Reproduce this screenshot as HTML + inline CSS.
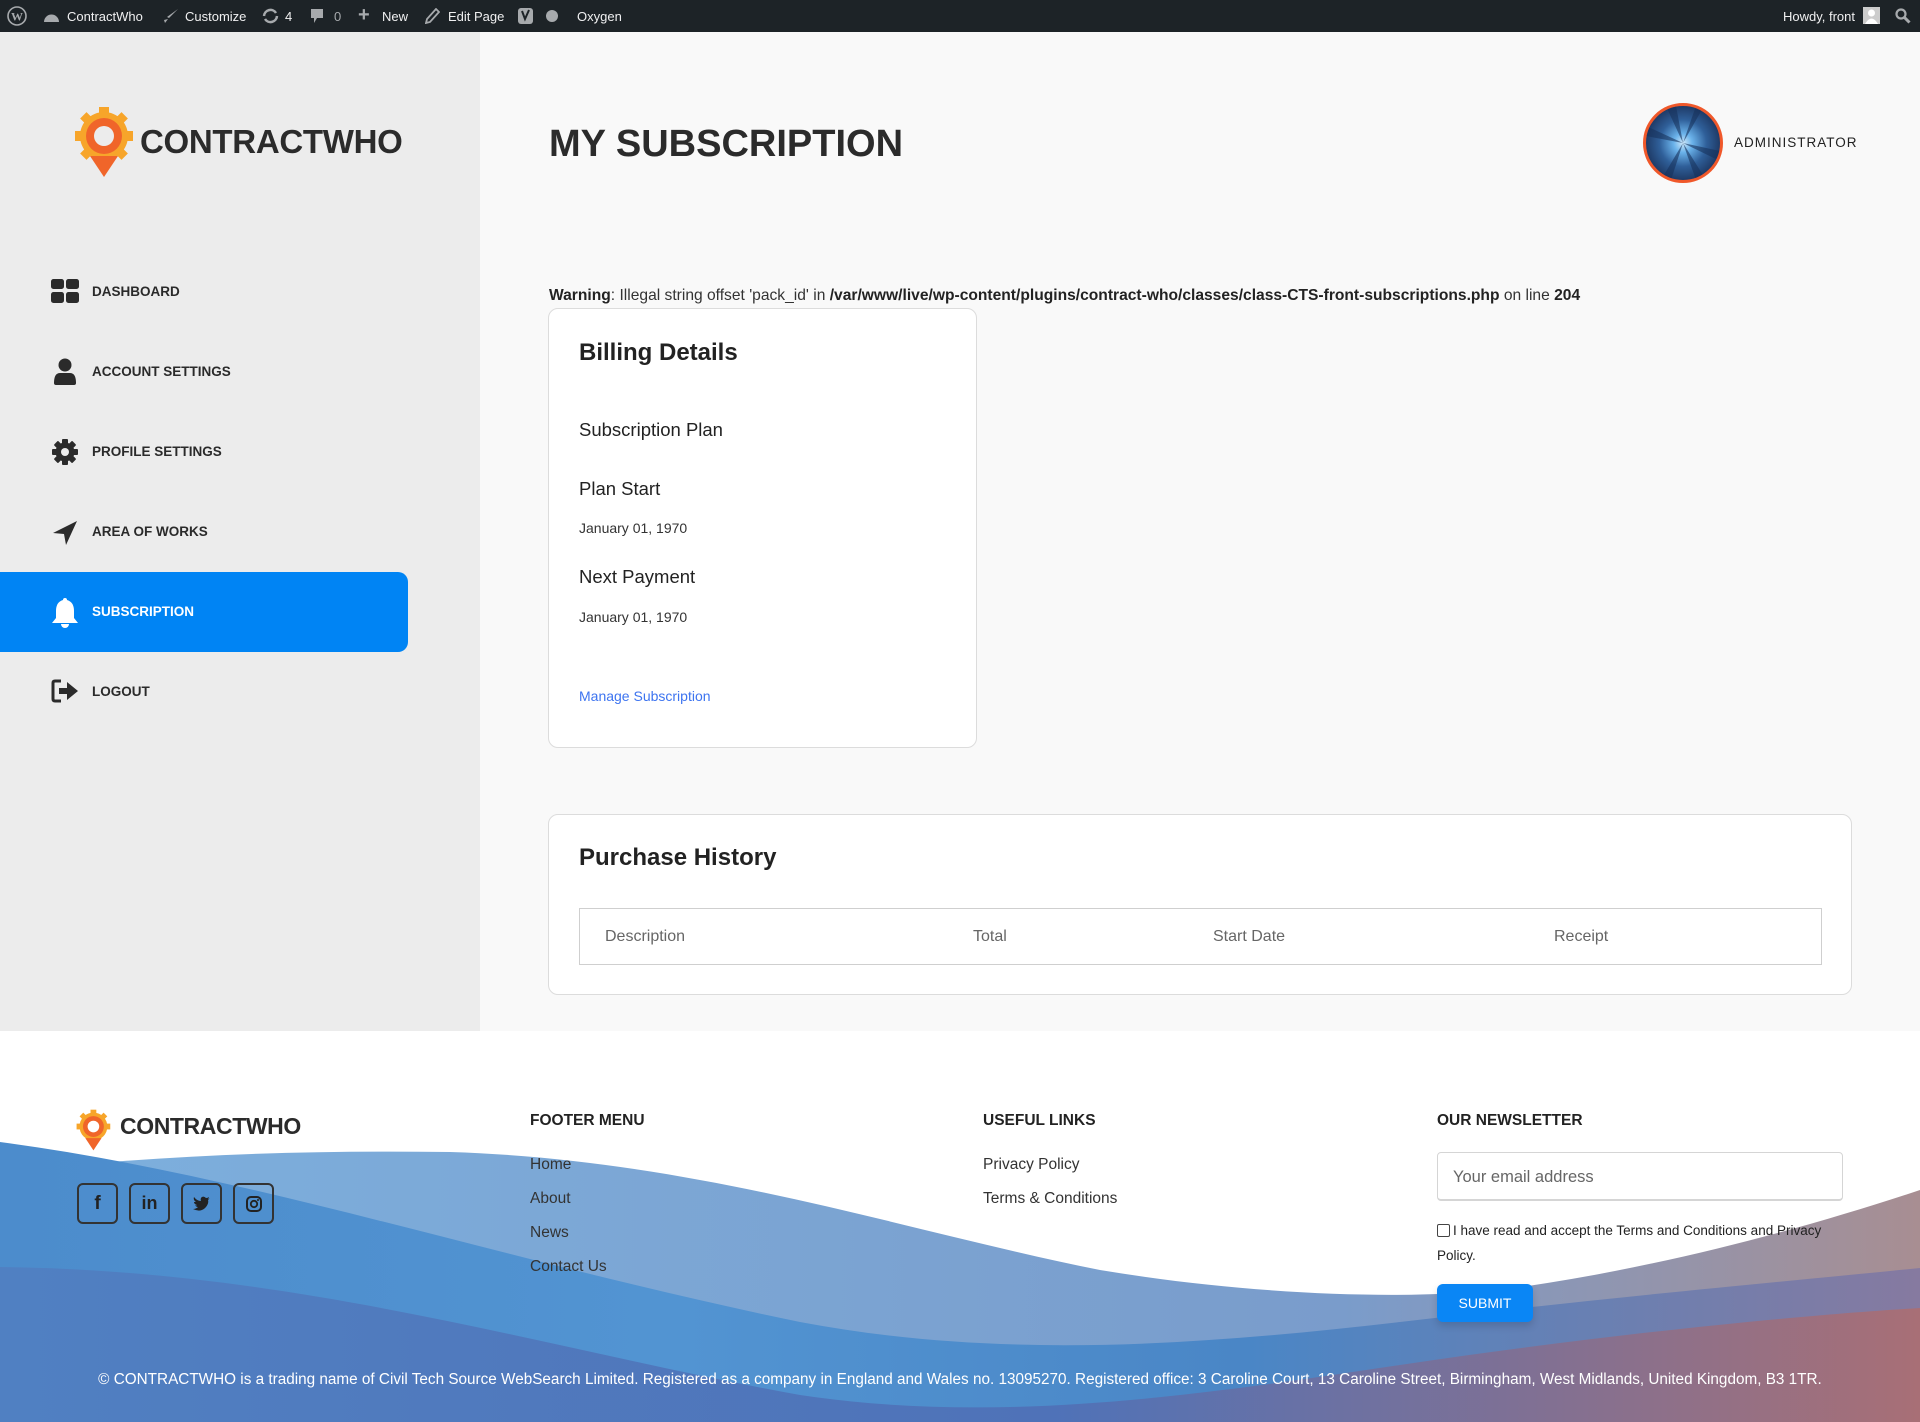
<!DOCTYPE html>
<html><head><meta charset="utf-8"><style>
*{margin:0;padding:0;box-sizing:border-box}
body{width:1920px;height:1422px;position:relative;overflow:hidden;background:#f9f9f9;font-family:"Liberation Sans",Arial,sans-serif;color:#222}
.a{position:absolute;white-space:nowrap;line-height:1}
#bar{position:absolute;left:0;top:0;width:1920px;height:32px;background:#1d2327;color:#f0f0f1;font-size:13px}
#bar .a{top:10px}
#side{position:absolute;left:0;top:32px;width:480px;height:999px;background:#ececec}
.nav{font-size:13.5px;font-weight:bold;color:#2a2a2a}
.card{position:absolute;background:#fff;border:1.5px solid #dcdcdc;border-radius:10px}
#foot{position:absolute;left:0;top:1031px;width:1920px;height:391px;background:#fff;overflow:hidden}
.soc{position:absolute;top:1183px;width:41px;height:41px;border:2px solid #333;border-radius:6px;display:flex;align-items:center;justify-content:center}
.fl{font-size:15.5px;color:#333}
.fh{font-size:15.5px;font-weight:bold;color:#222}
</style></head><body>

<div id="bar">
<svg class="a" style="left:7px;top:6px" width="20" height="20" viewBox="0 0 20 20"><circle cx="10" cy="10" r="9" fill="none" stroke="#a7aaad" stroke-width="1.6"/><text x="10" y="14.5" font-size="12" font-weight="bold" text-anchor="middle" fill="#a7aaad" font-family="Liberation Serif">W</text></svg>
<svg class="a" style="left:43px;top:9px" width="17" height="14" viewBox="0 0 17 14"><path d="M1 13 A7.5 7.5 0 1 1 16 13 Z" fill="#a7aaad"/></svg>
<span class="a" style="left:67px">ContractWho</span>
<svg class="a" style="left:163px;top:8px" width="16" height="16" viewBox="0 0 16 16"><path d="M15 1 L6 10 L4 9 Z M5 11 L2 15 L1 12 Z" fill="#a7aaad"/></svg>
<span class="a" style="left:185px">Customize</span>
<svg class="a" style="left:262px;top:8px" width="17" height="16" viewBox="0 0 17 16"><path d="M2 8 A6.5 6.5 0 0 1 14 5 M15 8 A6.5 6.5 0 0 1 3 11" fill="none" stroke="#a7aaad" stroke-width="2.5"/></svg>
<span class="a" style="left:285px">4</span>
<svg class="a" style="left:310px;top:8px" width="14" height="17" viewBox="0 0 14 17"><path d="M1 1 H13 V10 H7 L4 15 V10 H1 Z" fill="#a7aaad"/></svg>
<span class="a" style="left:334px;color:#a7aaad">0</span>
<span class="a" style="left:358px;top:5px;font-size:20px;font-weight:bold;color:#a7aaad">+</span>
<span class="a" style="left:382px">New</span>
<svg class="a" style="left:425px;top:8px" width="15" height="16" viewBox="0 0 15 16"><path d="M11 1 L14 4 L5 14 L1 15 L2 11 Z" fill="none" stroke="#a7aaad" stroke-width="1.8"/></svg>
<span class="a" style="left:448px">Edit Page</span>
<svg class="a" style="left:517px;top:7px" width="17" height="18" viewBox="0 0 17 18"><rect x="1" y="1" width="15" height="16" rx="3" fill="#a7aaad"/><path d="M5 4 L8 12 L12 3" stroke="#1d2327" stroke-width="2" fill="none"/></svg>
<svg class="a" style="left:546px;top:10px" width="12" height="12"><circle cx="6" cy="6" r="6" fill="#a7aaad"/></svg>
<span class="a" style="left:577px">Oxygen</span>
<span class="a" style="left:1783px">Howdy, front</span>
<div class="a" style="left:1863px;top:7px;width:17px;height:17px;background:#ccc"><svg width="17" height="17"><circle cx="8.5" cy="6" r="3.5" fill="#fff"/><path d="M2 17 Q8.5 6 15 17Z" fill="#fff"/></svg></div>
<svg class="a" style="left:1895px;top:8px" width="16" height="16" viewBox="0 0 16 16"><circle cx="6" cy="6" r="4.5" fill="none" stroke="#a7aaad" stroke-width="2.2"/><path d="M9.5 9.5 L14.5 14.5" stroke="#a7aaad" stroke-width="3"/></svg>
</div>

<div id="side"></div>
<svg class="a" style="left:74px;top:106px" width="62" height="72" viewBox="0 0 62 72">
<g fill="#f7a52a"><circle cx="30" cy="30" r="24"/>
<rect x="25" y="1" width="10" height="10"/><rect x="25" y="49" width="10" height="8"/><rect x="1" y="25" width="10" height="10"/><rect x="49" y="25" width="10" height="10"/>
<rect x="8" y="8" width="9" height="9" transform="rotate(45 12.5 12.5)"/><rect x="43" y="8" width="9" height="9" transform="rotate(45 47.5 12.5)"/><rect x="8" y="43" width="9" height="9" transform="rotate(45 12.5 47.5)"/><rect x="43" y="43" width="9" height="9" transform="rotate(45 47.5 47.5)"/></g>
<path d="M16 50 L30 71 L44 50 Z" fill="#f0652a"/>
<circle cx="30" cy="30" r="18" fill="#f0652a"/><circle cx="30" cy="30" r="10" fill="#ececec"/>
</svg>
<span class="a" style="left:140px;top:125px;font-size:33px;font-weight:bold;color:#2b2b2b;letter-spacing:-0.3px">CONTRACTWHO</span>

<svg class="a" style="left:51px;top:279px" width="28" height="24"><rect x="0" y="0" width="13" height="10" rx="2.5" fill="#2b2b2b"/><rect x="15" y="0" width="13" height="10" rx="2.5" fill="#2b2b2b"/><rect x="0" y="13" width="13" height="11" rx="2.5" fill="#2b2b2b"/><rect x="15" y="13" width="13" height="11" rx="2.5" fill="#2b2b2b"/></svg>
<span class="a nav" style="left:92px;top:285px">DASHBOARD</span>
<svg class="a" style="left:54px;top:358px" width="22" height="27"><circle cx="11" cy="7" r="6.5" fill="#2b2b2b"/><path d="M0 25 Q0 15 6 15 H16 Q22 15 22 25 Q22 27 20 27 H2 Q0 27 0 25Z" fill="#2b2b2b"/></svg>
<span class="a nav" style="left:92px;top:365px">ACCOUNT SETTINGS</span>
<svg class="a" style="left:52px;top:439px" width="26" height="26" viewBox="0 0 26 26"><g fill="#2b2b2b"><circle cx="13" cy="13" r="9.5"/><g id="t"><rect x="10" y="0" width="6" height="6" rx="1"/><rect x="10" y="20" width="6" height="6" rx="1"/></g><use href="#t" transform="rotate(45 13 13)"/><use href="#t" transform="rotate(90 13 13)"/><use href="#t" transform="rotate(135 13 13)"/></g><circle cx="13" cy="13" r="4" fill="#ececec"/></svg>
<span class="a nav" style="left:92px;top:445px">PROFILE SETTINGS</span>
<svg class="a" style="left:52px;top:520px" width="26" height="26" viewBox="0 0 26 26"><path d="M25 1 L1 13 L12 14 L14 25 Z" fill="#2b2b2b"/></svg>
<span class="a nav" style="left:92px;top:525px">AREA OF WORKS</span>
<div class="a" style="left:0;top:572px;width:408px;height:80px;background:#0084f4;border-radius:0 10px 10px 0"></div>
<svg class="a" style="left:51px;top:597px" width="28" height="31" viewBox="0 0 28 31"><path d="M14 1 Q16 1 16 3 Q23 5 23 14 V21 L27 26 H1 L5 21 V14 Q5 5 12 3 Q12 1 14 1Z" fill="#fff"/><path d="M10 27 A4 4 0 0 0 18 27Z" fill="#fff"/></svg>
<span class="a nav" style="left:92px;top:605px;color:#fff">SUBSCRIPTION</span>
<svg class="a" style="left:51px;top:679px" width="28" height="24" viewBox="0 0 28 24"><path d="M10 2 H4 Q2 2 2 4 V20 Q2 22 4 22 H10" fill="none" stroke="#2b2b2b" stroke-width="3"/><path d="M8 9 H16 V3 L27 12 L16 21 V15 H8 Z" fill="#2b2b2b"/></svg>
<span class="a nav" style="left:92px;top:685px">LOGOUT</span>

<span class="a" style="left:549px;top:125px;font-size:38px;font-weight:bold;color:#2b2b2b">MY SUBSCRIPTION</span>
<div class="a" style="left:1643px;top:103px;width:80px;height:80px;border-radius:50%;border:3.5px solid #f0582a;background:radial-gradient(circle at 50% 50%,#cfe9fb 0,#6ab2ea 18%,#2f5f99 45%,#1c355f 75%,#203a66 100%);overflow:hidden">
<svg width="74" height="74"><path d="M37 37 L20 0 H30Z M37 37 L50 0 H58Z M37 37 L0 20 V30Z M37 37 L74 45 V55Z M37 37 L15 74 H25Z M37 37 L50 74 H60Z" fill="#18325c" opacity=".6"/></svg></div>
<span class="a" style="left:1734px;top:136px;font-size:13.5px;letter-spacing:1px;color:#222">ADMINISTRATOR</span>

<span class="a" style="left:549px;top:288px;font-size:15.6px;color:#333"><b style="color:#222">Warning</b>: Illegal string offset 'pack_id' in <b style="color:#222">/var/www/live/wp-content/plugins/contract-who/classes/class-CTS-front-subscriptions.php</b> on line <b style="color:#222">204</b></span>

<div class="card" style="left:548px;top:308px;width:429px;height:440px"></div>
<span class="a" style="left:579px;top:341px;font-size:24px;font-weight:bold;color:#222">Billing Details</span>
<span class="a" style="left:579px;top:421px;font-size:18.5px;color:#222">Subscription Plan</span>
<span class="a" style="left:579px;top:480px;font-size:18.5px;color:#222">Plan Start</span>
<span class="a" style="left:579px;top:521px;font-size:14px;color:#333">January 01, 1970</span>
<span class="a" style="left:579px;top:568px;font-size:18.5px;color:#222">Next Payment</span>
<span class="a" style="left:579px;top:610px;font-size:14px;color:#333">January 01, 1970</span>
<span class="a" style="left:579px;top:689px;font-size:14px;color:#3d74f0">Manage Subscription</span>

<div class="card" style="left:548px;top:814px;width:1304px;height:181px"></div>
<span class="a" style="left:579px;top:846px;font-size:24px;font-weight:bold;color:#222">Purchase History</span>
<div class="a" style="left:579px;top:908px;width:1243px;height:57px;border:1.5px solid #cfcfcf"></div>
<span class="a" style="left:605px;top:929px;font-size:16px;color:#666">Description</span>
<span class="a" style="left:973px;top:929px;font-size:16px;color:#666">Total</span>
<span class="a" style="left:1213px;top:929px;font-size:16px;color:#666">Start Date</span>
<span class="a" style="left:1554px;top:929px;font-size:16px;color:#666">Receipt</span>

<div id="foot">
<svg width="1920" height="391" viewBox="0 1031 1920 391" style="position:absolute;left:0;top:0">
<defs>
<linearGradient id="gL" x1="0" x2="1"><stop offset="0" stop-color="#7db0de"/><stop offset=".7" stop-color="#7a9ccb"/><stop offset="1" stop-color="#a88e92"/></linearGradient>
<linearGradient id="gD" x1="0" x2="1"><stop offset="0" stop-color="#4c8ccc"/><stop offset=".35" stop-color="#5294d2"/><stop offset=".65" stop-color="#4a86c6"/><stop offset="1" stop-color="#867aa0"/></linearGradient>
<linearGradient id="gB" x1="0" x2="1"><stop offset="0" stop-color="#5080c2"/><stop offset=".55" stop-color="#4f72b8"/><stop offset="1" stop-color="#a86f76"/></linearGradient>
</defs>
<path d="M0 1173 C150 1155 300 1150 450 1152 C700 1160 900 1230 1100 1270 C1250 1295 1400 1300 1500 1290 C1650 1270 1800 1230 1920 1190 L1920 1422 L0 1422Z" fill="url(#gL)"/>
<path d="M0 1142 C250 1175 500 1260 800 1322 C1000 1360 1200 1345 1400 1322 C1600 1298 1800 1280 1920 1268 L1920 1422 L0 1422Z" fill="url(#gD)"/>
<path d="M0 1267 C300 1270 550 1350 800 1395 C1000 1425 1200 1395 1400 1365 C1600 1335 1800 1315 1920 1308 L1920 1422 L0 1422Z" fill="url(#gB)"/>
</svg>
</div>
<svg class="a" style="left:76px;top:1107px" width="36" height="46" viewBox="0 0 62 72">
<g fill="#f7a52a"><circle cx="30" cy="30" r="24"/><rect x="25" y="1" width="10" height="10"/><rect x="1" y="25" width="10" height="10"/><rect x="49" y="25" width="10" height="10"/><rect x="8" y="8" width="9" height="9" transform="rotate(45 12.5 12.5)"/><rect x="43" y="8" width="9" height="9" transform="rotate(45 47.5 12.5)"/></g>
<path d="M16 50 L30 71 L44 50 Z" fill="#f0652a"/><circle cx="30" cy="30" r="18" fill="#f0652a"/><circle cx="30" cy="30" r="10" fill="#fff"/></svg>
<span class="a" style="left:120px;top:1115px;font-size:23px;font-weight:bold;color:#2b2b2b;letter-spacing:-0.4px">CONTRACTWHO</span>
<div class="soc" style="left:77px"><span style="font-weight:bold;font-size:19px;color:#222">f</span></div>
<div class="soc" style="left:129px"><span style="font-weight:bold;font-size:18px;color:#222">in</span></div>
<div class="soc" style="left:181px"><svg width="18" height="15" viewBox="0 0 18 15"><path d="M17 2 Q16 3 15 3 Q16 2 16 1 Q15 2 13 2 Q11 0 9 1 Q7 2 8 5 Q4 5 1 1 Q0 4 3 6 Q2 6 1 6 Q1 8 4 9 Q3 10 2 9 Q3 11 5 11 Q3 13 0 13 Q8 17 13 11 Q16 7 15 4 Q16 3 17 2Z" fill="#222"/></svg></div>
<div class="soc" style="left:233px"><svg width="16" height="16"><rect x="1" y="1" width="14" height="14" rx="4" fill="none" stroke="#222" stroke-width="2"/><circle cx="8" cy="8" r="3.2" fill="none" stroke="#222" stroke-width="1.8"/><circle cx="12" cy="4" r="1" fill="#222"/></svg></div>

<span class="a fh" style="left:530px;top:1113px">FOOTER MENU</span>
<span class="a fl" style="left:530px;top:1157px">Home</span>
<span class="a fl" style="left:530px;top:1191px">About</span>
<span class="a fl" style="left:530px;top:1225px">News</span>
<span class="a fl" style="left:530px;top:1259px">Contact Us</span>
<span class="a fh" style="left:983px;top:1113px">USEFUL LINKS</span>
<span class="a fl" style="left:983px;top:1157px">Privacy Policy</span>
<span class="a fl" style="left:983px;top:1191px">Terms &amp; Conditions</span>
<span class="a fh" style="left:1437px;top:1113px">OUR NEWSLETTER</span>
<div class="a" style="left:1437px;top:1152px;width:406px;height:49px;background:#fff;border:1.5px solid #d5d5d5;border-bottom-width:2.5px;border-radius:4px"></div>
<span class="a" style="left:1453px;top:1169px;font-size:16.5px;color:#666">Your email address</span>
<div class="a" style="left:1437px;top:1224px;width:13px;height:13px;border:1px solid #444;border-radius:2px;background:#fff"></div>
<span class="a" style="left:1453px;top:1224px;font-size:13.5px;color:#222">I have read and accept the Terms and Conditions and Privacy</span>
<span class="a" style="left:1437px;top:1249px;font-size:13.5px;color:#222">Policy.</span>
<div class="a" style="left:1437px;top:1284px;width:96px;height:38px;background:#0a86f5;border-radius:6px;box-shadow:0 4px 8px rgba(0,0,0,.15);color:#fff;font-size:14px;text-align:center;line-height:38px">SUBMIT</div>
<div class="a" style="left:0;top:1372px;width:1920px;text-align:center;font-size:15.3px;color:#fff">© CONTRACTWHO is a trading name of Civil Tech Source WebSearch Limited. Registered as a company in England and Wales no. 13095270. Registered office: 3 Caroline Court, 13 Caroline Street, Birmingham, West Midlands, United Kingdom, B3 1TR.</div>
</body></html>
